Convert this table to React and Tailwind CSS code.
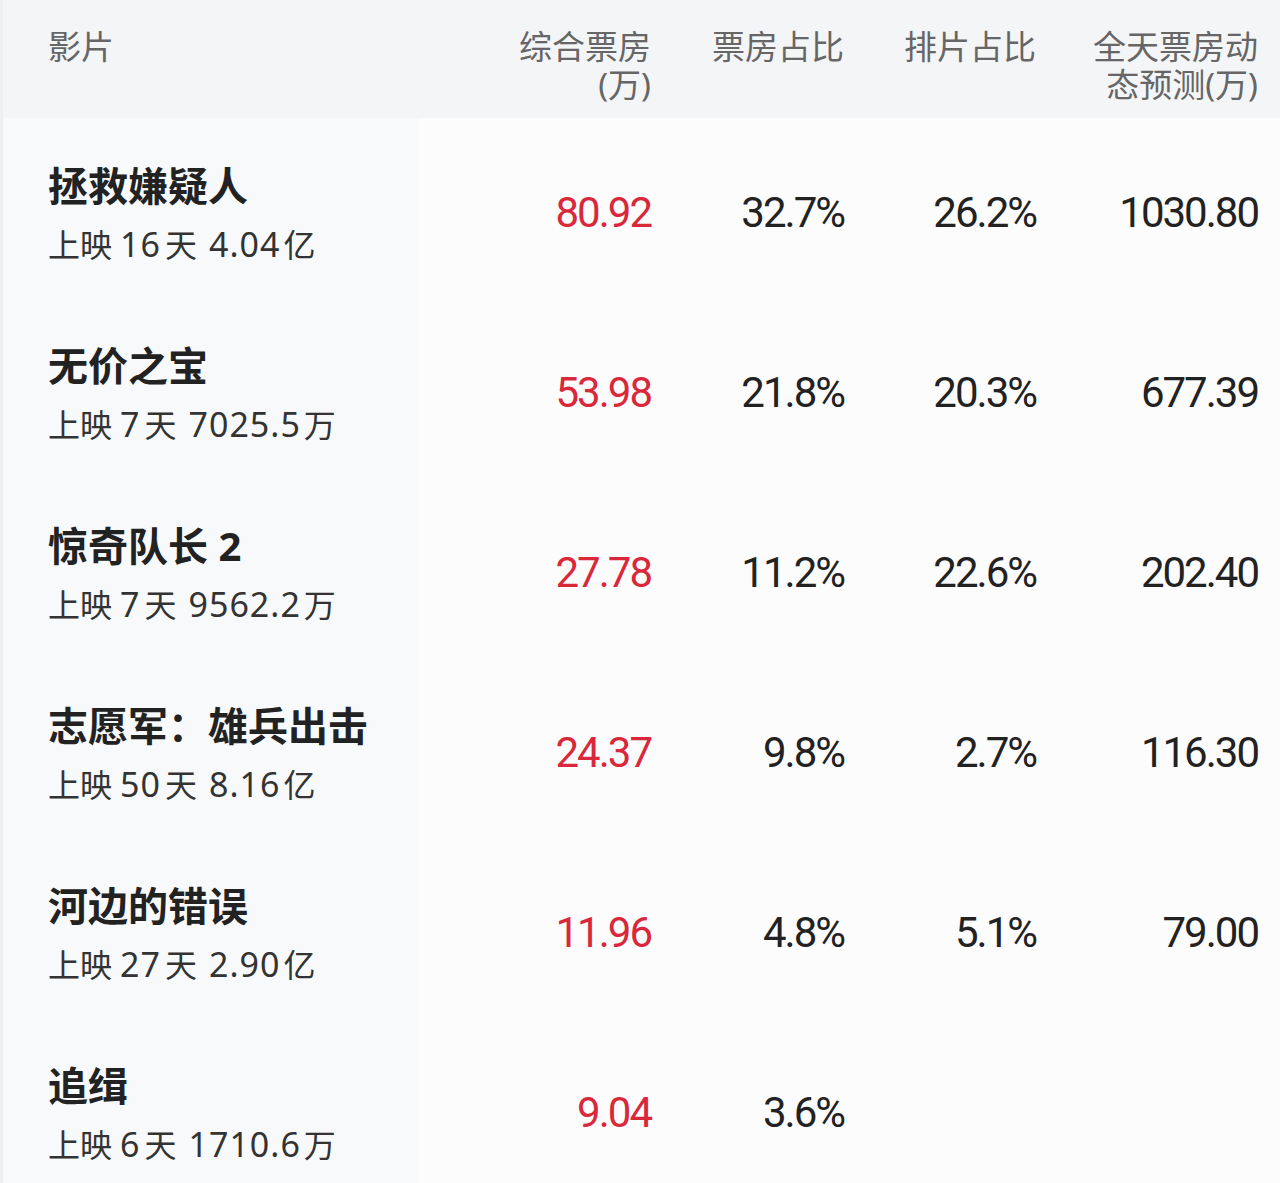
const films = [
  { name: '拯救嫌疑人', days: '16', total: '4.04', unit: '亿', box: '80.92', boxRate: '32.7%', showRate: '26.2%', forecast: '1030.80' },
  { name: '无价之宝', days: '7', total: '7025.5', unit: '万', box: '53.98', boxRate: '21.8%', showRate: '20.3%', forecast: '677.39' },
  { name: '惊奇队长 2', days: '7', total: '9562.2', unit: '万', box: '27.78', boxRate: '11.2%', showRate: '22.6%', forecast: '202.40' },
  { name: '志愿军：雄兵出击', days: '50', total: '8.16', unit: '亿', box: '24.37', boxRate: '9.8%', showRate: '2.7%', forecast: '116.30' },
  { name: '河边的错误', days: '27', total: '2.90', unit: '亿', box: '11.96', boxRate: '4.8%', showRate: '5.1%', forecast: '79.00' },
  { name: '追缉', days: '6', total: '1710.6', unit: '万', box: '9.04', boxRate: '3.6%', showRate: '', forecast: '' },
];

const cjk = "font-['Noto_Sans','Noto_Sans_CJK_SC',sans-serif]";
const num = "font-['Roboto','Noto_Sans_CJK_SC',sans-serif]";
const cols = 'grid grid-cols-[415px_233px_193px_192px_222px]';

const App = () => {
  return (
    <div className={`w-[1280px] h-[1183px] overflow-hidden bg-[#fcfcfd] border-l-[3px] border-[#eeeff2] ${cjk}`}>
      {/* Header */}
      <div className={`${cols} h-[118px] bg-[#f4f5f7] text-[33px] text-[#666]`}>
        <div className="pl-[45px] pt-[28px] leading-[38px]">影片</div>
        <div className="pt-[28px] text-right leading-[38px]">
          <div>综合票房</div>
          <div>(万)</div>
        </div>
        <div className="pt-[28px] text-right leading-[38px]">票房占比</div>
        <div className="pt-[28px] text-right leading-[38px]">排片占比</div>
        <div className="pt-[28px] text-right leading-[38px]">
          <div>全天票房动</div>
          <div>态预测(万)</div>
        </div>
      </div>

      {/* Rows */}
      {films.map((f, i) => (
        <div key={i} className={`${cols} h-[180px]`}>
          <div className="bg-[#f8f9fb] pl-[45px] pt-[12px] flex flex-col justify-center">
            <div className="text-[40px] leading-[60px] font-bold text-[#222] whitespace-nowrap">{f.name}</div>
            <div className="text-[32px] leading-[56px] text-[#333] whitespace-nowrap">
              上映
              <span className="ml-[8px] mr-[4px] text-[34px] tracking-[1px]">{f.days}</span>
              天
              <span className="ml-[12px] mr-[3px] text-[34px] tracking-[1px]">{f.total}</span>
              {f.unit}
            </div>
          </div>
          <div className={`${num} flex items-center justify-end pt-[8px] text-[42px] tracking-[-2px] text-[#d9283a]`}>{f.box}</div>
          <div className={`${num} flex items-center justify-end pt-[8px] text-[42px] tracking-[-2px] text-[#222]`}>{f.boxRate}</div>
          <div className={`${num} flex items-center justify-end pt-[8px] text-[42px] tracking-[-2px] text-[#222]`}>{f.showRate}</div>
          <div className={`${num} flex items-center justify-end pt-[8px] text-[42px] tracking-[-2px] text-[#222]`}>{f.forecast}</div>
        </div>
      ))}
    </div>
  );
};

export default App;
